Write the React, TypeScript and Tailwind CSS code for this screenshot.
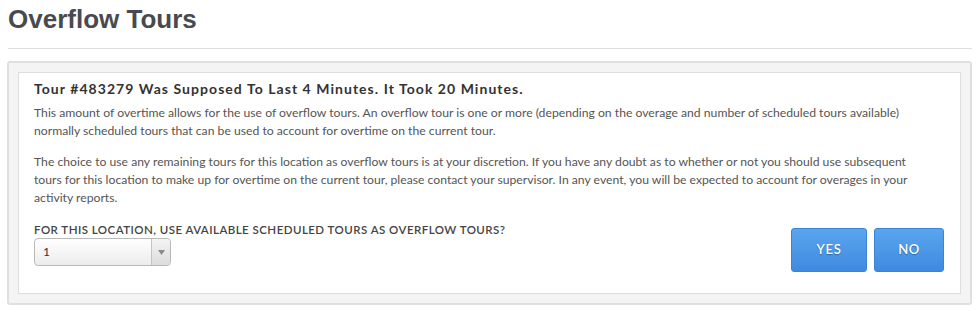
export default function App() {
  return (
    <main className="min-h-screen bg-white px-2 pt-[4px]" style={{ fontFamily: "Lato, 'Open Sans', sans-serif" }}>
      <h1 className="text-[26px] leading-[30px] font-bold text-[#484a4f]" style={{ fontFamily: "'Liberation Sans', Arial, sans-serif" }}>
        Overflow Tours
      </h1>
      <hr className="mt-[14px] w-[964px] border-t border-[#dddddd]" />

      {/* OUTER PANEL */}
      <section className="mt-[12px] w-[965px] -ml-px rounded-[3px] border-2 border-[#e0e0e0] bg-[#f4f4f4] p-[9px]">
        <div className="border border-[#dedede] bg-white px-[15px] pt-[6px] pb-[21px]">
          <h2 className="mb-[5px] text-[14px] leading-[20px] font-bold tracking-[0.075em] text-[#333]">
            Tour #483279 Was Supposed To Last 4 Minutes. It Took 20 Minutes.
          </h2>
          <p className="text-[12.2px] leading-[18px] text-[#555] whitespace-nowrap">
            This amount of overtime allows for the use of overflow tours. An overflow tour is one or more (depending on the overage and number of scheduled tours available)
            <br />
            normally scheduled tours that can be used to account for overtime on the current tour.
          </p>
          <p className="mt-[13px] text-[12.2px] leading-[18px] text-[#555] whitespace-nowrap">
            The choice to use any remaining tours for this location as overflow tours is at your discretion. If you have any doubt as to whether or not you should use subsequent
            <br />
            tours for this location to make up for overtime on the current tour, please contact your supervisor. In any event, you will be expected to account for overages in your
            <br />
            activity reports.
          </p>

          <div className="mt-[16px] flex items-end justify-between">
            <div>
              <label className="block text-[11.5px] leading-[14px] font-semibold tracking-[0.04em] uppercase text-[#444]">
                For this location, use available scheduled tours as overflow tours?
              </label>
              <div className="mt-[1px] mb-[6px] flex h-[28px] w-[137px] items-stretch rounded-[4px] border border-[#b9b9b9] bg-gradient-to-b from-white to-[#ececec] shadow-[inset_0_1px_0_#fff]">
                <span className="flex-1 pl-[8px] text-[12px] leading-[26px] text-[#333]">1</span>
                <span className="flex w-[19px] items-center justify-center border-l border-[#c4c4c4] bg-gradient-to-b from-[#f4f4f4] to-[#dcdcdc] rounded-r-[4px]">
                  <svg width="7" height="5" viewBox="0 0 7 5"><path d="M0 0h7L3.5 5z" fill="#8a8a8a" /></svg>
                </span>
              </div>
            </div>
            <div className="flex gap-[7px] mr-[1px]">
              <button className="h-[44px] w-[76px] rounded-[3px] border border-[#3a83d6] bg-gradient-to-b from-[#5aa5ee] to-[#3f8ae0] text-[13px] font-semibold tracking-[0.05em] text-white [text-shadow:0_1px_1px_rgba(0,0,0,0.3)]">
                YES
              </button>
              <button className="h-[44px] w-[70px] rounded-[3px] border border-[#3a83d6] bg-gradient-to-b from-[#5aa5ee] to-[#3f8ae0] text-[13px] font-semibold tracking-[0.05em] text-white [text-shadow:0_1px_1px_rgba(0,0,0,0.3)]">
                NO
              </button>
            </div>
          </div>
        </div>
      </section>
    </main>
  );
}
